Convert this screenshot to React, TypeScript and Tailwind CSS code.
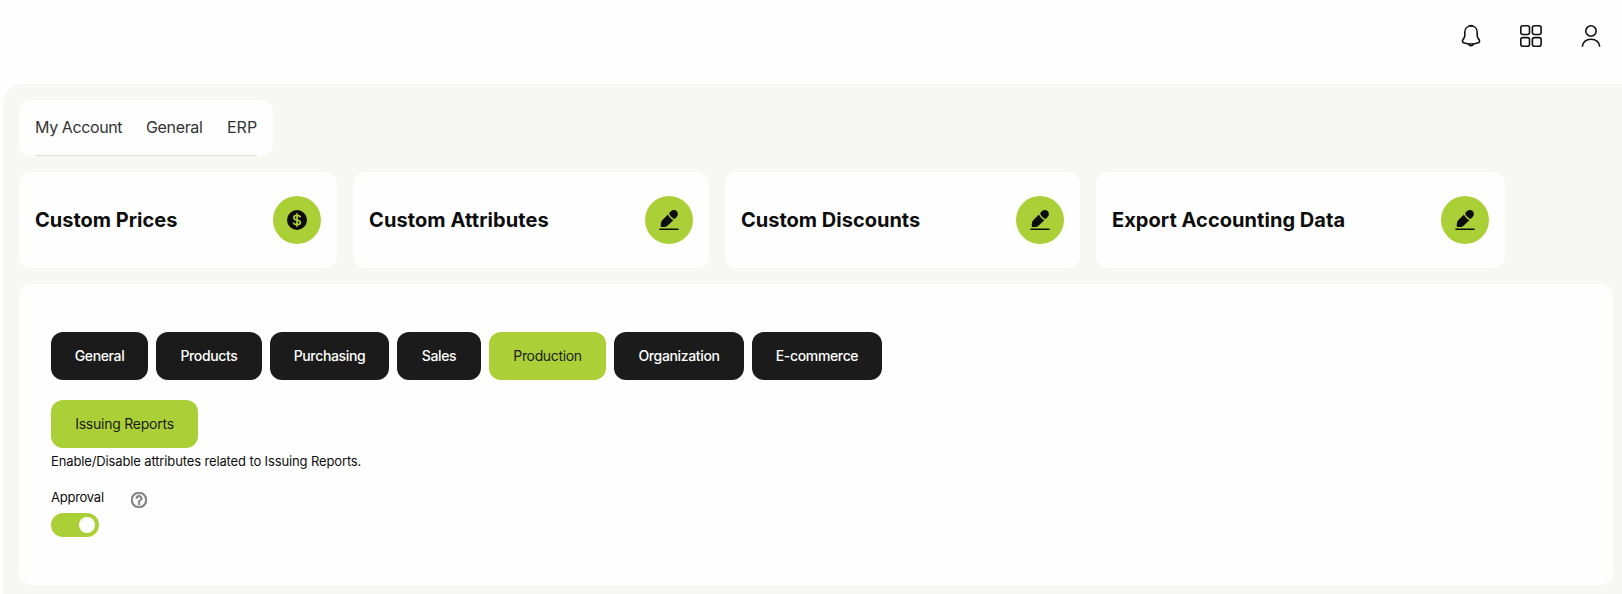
import { useState } from 'react'
import clsx from 'clsx'

function BellIcon() {
  return (
    <svg width="24" height="24" viewBox="0 0 24 24" fill="none" stroke="#111" strokeWidth="1.6" strokeLinejoin="round">
      <path d="M12 2C8.2 2 5.8 4.8 5.8 8.2V11.2C5.8 12.2 5.5 13.1 5 14L3.8 16C3.1 17.3 3.5 18.2 4.7 18.7C9.3 20.3 14.7 20.3 19.3 18.7C20.5 18.2 20.9 17.3 20.2 16L19 14C18.5 13.1 18.2 12.2 18.2 11.2V8.2C18.2 4.8 15.8 2 12 2Z" />
      <path d="M10 2.2C11 1.5 13 1.5 14 2.2" />
      <path d="M9.4 20.2C10.6 22.3 13.4 22.3 14.6 20.2" />
    </svg>
  )
}

function GridIcon() {
  return (
    <svg width="24" height="24" viewBox="0 0 24 24" fill="none" stroke="#111" strokeWidth="1.6">
      <rect x="1.8" y="1.8" width="8.7" height="8.7" rx="2" />
      <rect x="13.4" y="1.8" width="8.7" height="8.7" rx="2" />
      <rect x="1.8" y="13.6" width="8.7" height="8.7" rx="2" />
      <rect x="13.4" y="13.6" width="8.7" height="8.7" rx="2" />
    </svg>
  )
}

function UserIcon() {
  return (
    <svg width="24" height="24" viewBox="0 0 24 24" fill="none" stroke="#111" strokeWidth="1.6">
      <circle cx="12" cy="7" r="5.2" />
      <path d="M3.3 22.8C3.3 18.2 7 15.2 12 15.2S20.7 18.2 20.7 22.8" />
    </svg>
  )
}

function DollarIcon() {
  return (
    <svg width="24" height="24" viewBox="0 0 24 24" fill="none">
      <circle cx="12" cy="12" r="10" fill="#0d0d0d" />
      <path
        d="M15.3 9.4C15.1 8 13.9 7.4 12 7.4C10 7.4 8.8 8.2 8.8 9.7C8.8 11.2 9.9 11.6 12 12C14.3 12.4 15.4 13 15.4 14.5C15.4 16 14.1 16.7 12 16.7C9.9 16.7 8.7 16 8.5 14.5M12 5.3V18.8"
        stroke="#abd037"
        strokeWidth="1.7"
      />
    </svg>
  )
}

function PencilIcon() {
  return (
    <svg width="24" height="24" viewBox="0 0 24 24" fill="#0d0d0d">
      <path d="M10.9 6.4L5.2 12.3C4.5 13 4.1 13.8 4 14.7L3.7 17.2C3.6 18.5 4.2 19.2 5.4 19.1L8 18.9C9 18.8 9.8 18.4 10.5 17.7L16.5 12C14 10.9 12 9 10.9 6.4Z" />
      <path d="M12.1 5.3L13.5 3.6C15.3 1.5 17.9 1.4 19.7 3.1C21.4 4.9 21.3 7.7 19.4 9.3L17.6 10.9C14.9 10.2 12.9 8.1 12.1 5.3Z" />
      <rect x="2.2" y="20.4" width="19.6" height="1.5" rx="0.75" />
    </svg>
  )
}

function HelpIcon() {
  return (
    <svg width="16" height="16" viewBox="2 2 20 20" fill="#808080">
      <path d="M11 18h2v-2h-2v2zm1-16C6.48 2 2 6.48 2 12s4.48 10 10 10 10-4.48 10-10S17.52 2 12 2zm0 18c-4.41 0-8-3.59-8-8s3.59-8 8-8 8 3.59 8 8-3.59 8-8 8zm0-14c-2.21 0-4 1.79-4 4h2c0-1.1.9-2 2-2s2 .9 2 2c0 2-3 1.75-3 5h2c0-2.25 3-2.5 3-5 0-2.21-1.79-4-4-4z" stroke="#808080" strokeWidth="0.9" />
    </svg>
  )
}

const links = [
  { label: 'My Account', className: 'w-[87px] tracking-[-0.4px]' },
  { label: 'General', className: 'w-14 tracking-[-0.35px]' },
  { label: 'ERP', className: 'w-[31px] pl-px' },
]

const cards = [
  { title: 'Custom Prices', icon: DollarIcon, className: 'w-[318px]' },
  { title: 'Custom Attributes', icon: PencilIcon, className: 'w-[356px] tracking-[0.1px]' },
  { title: 'Custom Discounts', icon: PencilIcon, className: 'w-[355px]' },
  { title: 'Export Accounting Data', icon: PencilIcon, className: 'w-[409px] tracking-[0.05px]' },
]

const tabs = [
  { label: 'General', className: 'w-[97px]' },
  { label: 'Products', className: 'w-[106px]' },
  { label: 'Purchasing', className: 'w-[119px]' },
  { label: 'Sales', className: 'w-[84px]' },
  { label: 'Production', className: 'w-[117px]' },
  { label: 'Organization', className: 'w-[130px]' },
  { label: 'E-commerce', className: 'w-[130px]' },
]

export default function App() {
  const [activeTab, setActiveTab] = useState('Production')
  const [approval, setApproval] = useState(true)

  return (
    <div className="flex h-[594px] flex-col overflow-hidden bg-[#fefefe] font-['Inter',sans-serif] text-[#0d0d0d]">
      <header className="flex h-[84px] shrink-0 items-start justify-end gap-9 pt-6 pr-[19px]">
        <button aria-label="Notifications"><BellIcon /></button>
        <button aria-label="Apps"><GridIcon /></button>
        <button aria-label="Profile"><UserIcon /></button>
      </header>

      <main className="ml-[3px] flex flex-1 flex-col items-start gap-4 rounded-tl-[20px] bg-[#f7f8f3] pt-4 pl-4">
        <nav className="h-14 rounded-xl bg-[#fefefe] px-4">
          <div className="flex h-14 items-center gap-6 border-b border-[#dfe0dc] pb-0.5 text-base text-[#333]">
            {links.map((link) => (
              <a key={link.label} href="#" className={clsx('whitespace-nowrap', link.className)}>
                {link.label}
              </a>
            ))}
          </div>
        </nav>

        <div className="flex gap-4">
          {cards.map(({ title, icon: Icon, className }) => (
            <div
              key={title}
              className={clsx('flex h-24 items-center justify-between rounded-xl bg-[#fefefe] px-4', className)}
            >
              <h2 className="text-xl font-bold whitespace-nowrap">{title}</h2>
              <div className="flex size-12 items-center justify-center rounded-full bg-[#abd037]">
                <Icon />
              </div>
            </div>
          ))}
        </div>

        <section className="h-[301px] w-[1594px] rounded-xl bg-[#fefefe] px-8 pt-12">
          <div className="flex gap-2">
            {tabs.map((tab) => (
              <button
                key={tab.label}
                onClick={() => setActiveTab(tab.label)}
                className={clsx(
                  'h-12 rounded-xl text-sm tracking-[-0.35px] whitespace-nowrap',
                  tab.label === activeTab ? 'bg-[#abd037] text-[#1b1b1b]' : 'bg-[#1b1b1b] font-medium text-white',
                  tab.className,
                )}
              >
                {tab.label}
              </button>
            ))}
          </div>

          <button className="mt-5 block h-12 w-[147px] rounded-xl bg-[#abd037] text-sm tracking-[-0.24px] text-[#1b1b1b]">
            Issuing Reports
          </button>
          <p className="mt-[3px] text-[13px] leading-5 tracking-[-0.13px]">
            Enable/Disable attributes related to Issuing Reports.
          </p>

          <div className="mt-4 flex h-5 items-center">
            <span className="w-20 text-[13px] leading-5 tracking-[-0.25px]">Approval</span>
            <span className="mt-1.5"><HelpIcon /></span>
          </div>
          <button
            role="switch"
            aria-checked={approval}
            aria-label="Approval"
            onClick={() => setApproval(!approval)}
            className={clsx(
              'mt-1.5 flex h-6 w-12 items-center rounded-full px-1',
              approval ? 'justify-end bg-[#abd037]' : 'justify-start bg-gray-300',
            )}
          >
            <span className="size-4 rounded-full bg-white" />
          </button>
        </section>
      </main>
    </div>
  )
}
